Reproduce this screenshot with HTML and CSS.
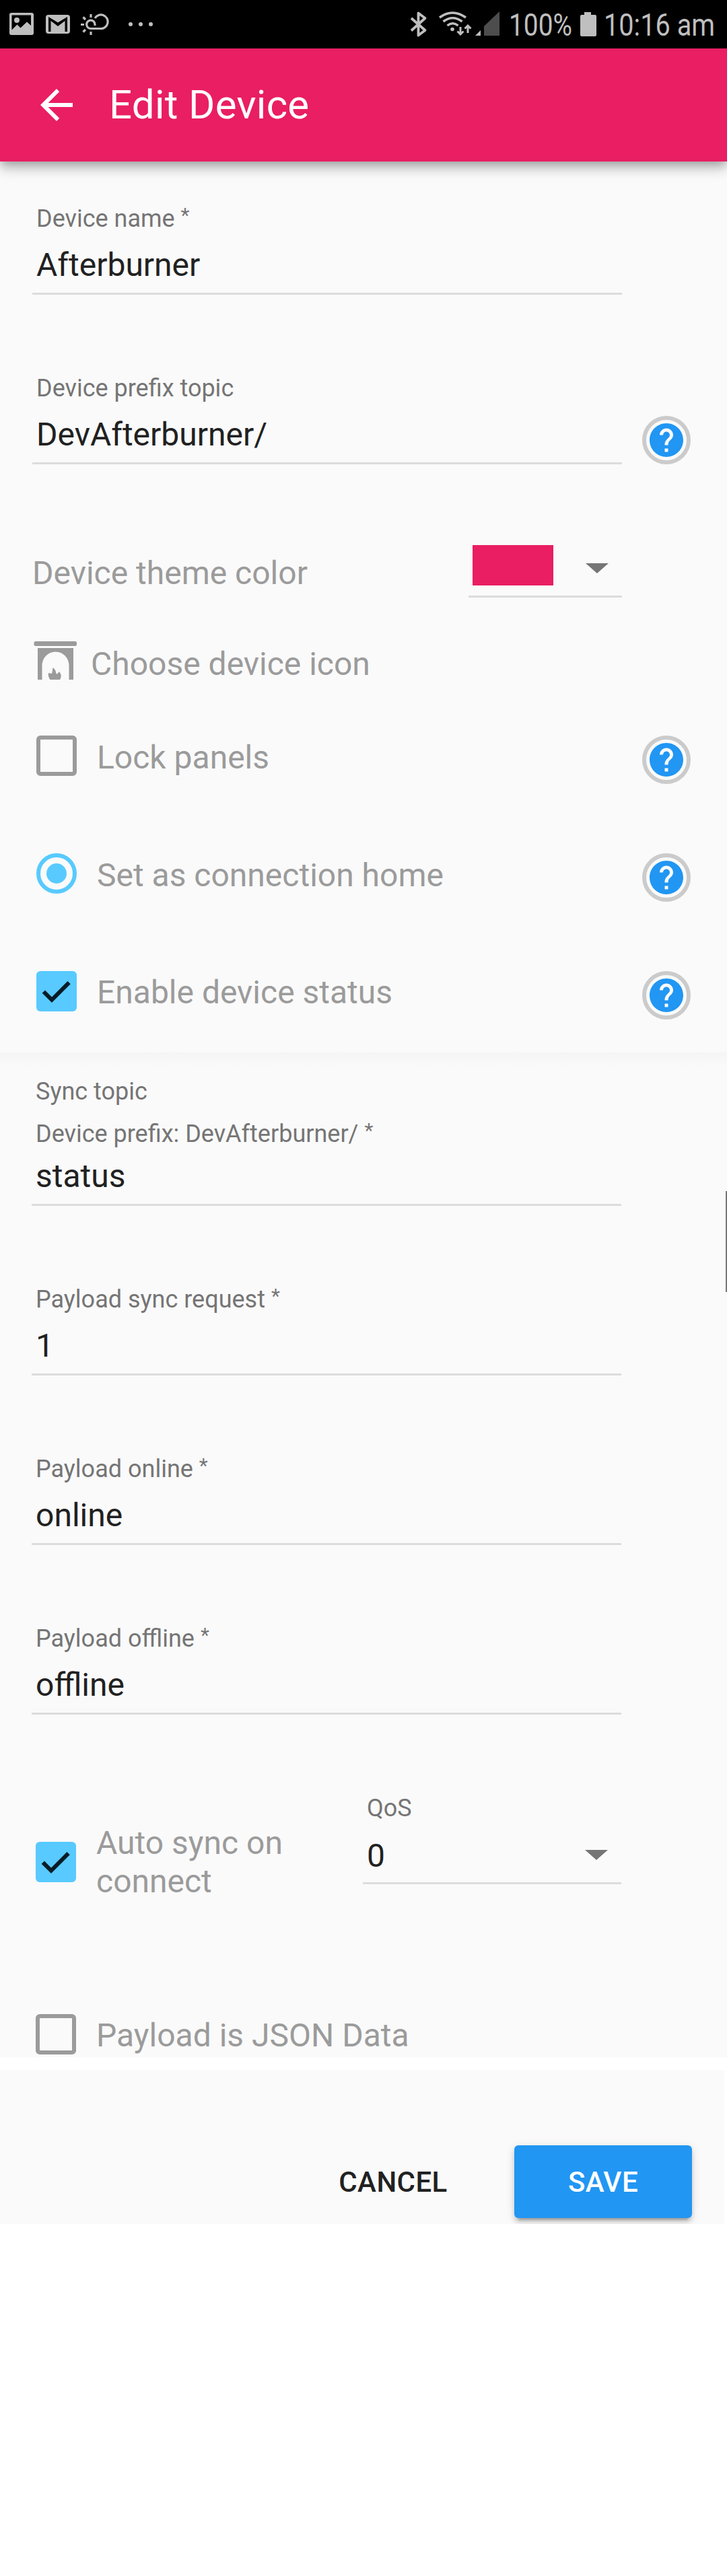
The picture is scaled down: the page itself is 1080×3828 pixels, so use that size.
FILE: index.html
```html
<!DOCTYPE html>
<html lang="en">
<head>
<meta charset="utf-8">
<title>Edit Device</title>
<link rel="stylesheet" href="styles.css">
</head>
<body>
<svg class="defs" aria-hidden="true">
  <symbol id="help" viewBox="0 0 24 24"><path d="M12 2C6.48 2 2 6.48 2 12s4.48 10 10 10 10-4.48 10-10S17.52 2 12 2zm1 17h-2v-2h2v2zm2.07-7.75l-.9.92C13.45 12.9 13 13.5 13 15h-2v-.5c0-1.1.45-2.1 1.17-2.83l1.24-1.26c.37-.36.59-.86.59-1.41 0-1.1-.9-2-2-2s-2 .9-2 2H8c0-2.21 1.79-4 4-4s4 1.79 4 4c0 .88-.36 1.68-.93 2.25z"/></symbol>
  <symbol id="tick" viewBox="0 0 60 60"><path d="M10.8 30.6L23 42.8 48.6 17.2" fill="none" stroke="#071c27" stroke-width="6"/></symbol>
</svg>

<div class="statusbar">
  <svg width="240" height="72" viewBox="0 0 240 72" fill="#bfbfbf">
    <path fill-rule="evenodd" d="M17 19h30q3 0 3 3v27q0 3-3 3h-30q-3 0-3-3v-27q0-3 3-3zM17.500 22.500v22l8-8 5 5 9.500-9 6 5.500v-15.500z"/>
    <circle cx="25" cy="30" r="4"/>
    <path fill-rule="evenodd" d="M72 22h28q4 0 4 4v20q0 4-4 4h-28q-4 0-4-4v-20q0-4 4-4zM72 25v22h3.500v-16l10.500 8 10.500-8v16h3.500v-22l-14 8.500z"/>
    <g fill="none" stroke="#bfbfbf" stroke-width="3.200">
      <path d="M141 38v-2a6.200 6.200 0 1 0-6 6.500h14A10.300 10.300 0 1 0 141 27"/>
      <path d="M135 21v5M135 47v5M120 36.500h5M123.500 25.500l3.500 3.500M123.500 47.500l3.500-3.500"/>
    </g>
    <circle cx="194" cy="36" r="3"/><circle cx="209" cy="36" r="3"/><circle cx="224" cy="36" r="3"/>
  </svg>
  <svg width="480" height="72" viewBox="600 0 480 72" fill="#bfbfbf">
    <path d="M611 27L631.500 45 621.500 52.500V19.500L631.500 27 611 45.500" fill="none" stroke="#bfbfbf" stroke-width="3.800" stroke-linejoin="round"/>
    <g fill="none" stroke="#bfbfbf" stroke-width="3.500">
      <path d="M653 26q19-14 39 0M658.500 32q14-10.500 28 0M664.500 38q8-6.500 16 0"/>
      <path d="M684 40v11M679.500 46.500l4.500 4.500 4.500-4.500M695 49v-11M690.500 42.500l4.500-4.500 4.500 4.500" stroke-width="3"/>
    </g>
    <circle cx="672" cy="43.500" r="2.800"/>
    <path d="M714 45v8h-8z"/>
    <path d="M742 17v36h-23v-14z" fill="#4d4d4d"/>
    <text transform="translate(756 53.300) scale(.846 1)" font-size="46">100%</text>
    <path d="M868 18h10v4h6q2 0 2 2v28q0 2-2 2h-20q-2 0-2-2v-28q0-2 2-2h4z"/>
    <text transform="translate(897 53.300) scale(.863 1)" font-size="46">10:16 am</text>
  </svg>
</div>

<header class="toolbar">
  <svg width="72" height="72" viewBox="0 0 24 24" fill="#fff"><path d="M20 11H7.830l5.590-5.590L12 4l-8 8 8 8 1.410-1.410L7.830 13H20v-2z"/></svg>
  <h1>Edit Device</h1>
</header>

<main>
  <section class="general">
    <div class="field"><label>Device name <sup>*</sup></label><div class="value">Afterburner</div></div>
    <div class="row prefix">
      <div class="field"><label>Device prefix topic</label><div class="value">DevAfterburner/</div></div>
      <div class="help"><svg><use href="#help"/></svg></div>
    </div>
    <div class="row theme">
      <div class="caption">Device theme color</div>
      <div class="colorselect"><i class="swatch"></i><i class="caret"></i></div>
    </div>
    <div class="iconrow">
      <svg width="64" height="58" viewBox="0 0 64 58" fill="#9b9b9b">
        <rect x="0.500" y="0" width="63.500" height="7" rx="2.500"/>
        <path d="M6 10h53v47h-6.500v-21a20 20.500 0 0 0-40 0v21h-6.500z"/>
        <path d="M24.500 57q-3.500-5-2.500-10l5 1q1-4 1.500-9 4 2.500 5 9l1.500.5 3-3.500q5 6 1 12z"/>
      </svg>
      <div class="caption">Choose device icon</div>
    </div>
    <div class="row option">
      <i class="box"></i><div class="caption low">Lock panels</div>
      <div class="help"><svg><use href="#help"/></svg></div>
    </div>
    <div class="row option">
      <i class="radio"></i><div class="caption low">Set as connection home</div>
      <div class="help"><svg><use href="#help"/></svg></div>
    </div>
    <div class="row option">
      <i class="box checked"><svg><use href="#tick"/></svg></i><div class="caption">Enable device status</div>
      <div class="help"><svg><use href="#help"/></svg></div>
    </div>
  </section>

  <section class="status">
    <div class="field sync"><label>Sync topic</label><label>Device prefix: DevAfterburner/ <sup>*</sup></label><div class="value">status</div></div>
    <div class="field"><label>Payload sync request <sup>*</sup></label><div class="value">1</div></div>
    <div class="field"><label>Payload online <sup>*</sup></label><div class="value">online</div></div>
    <div class="field"><label>Payload offline <sup>*</sup></label><div class="value">offline</div></div>
    <div class="row auto">
      <i class="box checked"><svg><use href="#tick"/></svg></i>
      <div class="caption">Auto sync on connect</div>
      <div class="field qos"><label>QoS</label><div class="value">0<i class="caret"></i></div></div>
    </div>
    <div class="row option json"><i class="box"></i><div class="caption">Payload is JSON Data</div></div>
    <i class="scrollbar"></i>
  </section>
</main>

<footer class="actions">
  <button class="cancel">CANCEL</button>
  <button class="save">SAVE</button>
</footer>
</body>
</html>
```
FILE: styles.css
```css
* { box-sizing: border-box; }
body {
  margin: 0;
  width: 1080px;
  min-height: 3828px;
  background: #fff;
  font-family: Roboto, "Liberation Sans", sans-serif;
  color: #212121;
}
svg { display: block; flex: none; }
.defs { display: none; }

.statusbar {
  height: 72px;
  display: flex;
  justify-content: space-between;
  background: #000;
}
.toolbar {
  position: relative;
  z-index: 1;
  height: 168px;
  padding-left: 48px;
  display: flex;
  align-items: center;
  gap: 42px;
  background: #e91e63;
  box-shadow: 0 6px 12px -3px rgba(0,0,0,.2), 0 12px 15px 0 rgba(0,0,0,.14), 0 3px 30px 0 rgba(0,0,0,.12);
}
.toolbar h1 {
  margin: 0;
  font-size: 60px;
  line-height: 72px;
  font-weight: 400;
  letter-spacing: .3px;
  color: #fff;
}

section { background: #fafafa; }
.general { height: 1324px; padding: 63px 54px 0 48px; }
.status {
  position: relative;
  height: 1493px;
  padding: 36px 54px 0 47px;
  background: linear-gradient(#f5f5f5, #fafafa 22px);
}

.field {
  width: 876px;
  border-bottom: 3px solid #dcdcdc;
  padding: 0 6px 11px;
}
.field + .field, .prefix, .auto { margin-top: 117px; }
.field label {
  display: block;
  height: 44px;
  font-size: 36px;
  line-height: 44px;
  color: #757575;
  white-space: nowrap;
}
.field sup {
  font-size: 30px;
  line-height: 0;
  vertical-align: 7px;
}
.value {
  display: flex;
  justify-content: space-between;
  margin-top: 17px;
  font-size: 48px;
  line-height: 60px;
}
.sync label + label { margin-top: 19px; }
.sync .value { margin-top: 11px; }

.row { display: flex; align-items: flex-start; }
.prefix { align-items: flex-end; justify-content: space-between; }
.caption {
  font-size: 48px;
  line-height: 60px;
  color: #9b9b9b;
}
.help {
  width: 72px;
  height: 72px;
  padding: 0;
  display: grid;
  place-items: center;
  border: 6px solid #cbcbcb;
  border-radius: 50%;
  margin-left: auto;
  flex: none;
}
.help svg { width: 60px; height: 60px; fill: #2196f3; }

.theme { margin-top: 120px; width: 876px; justify-content: space-between; }
.theme .caption { margin-top: 12px; }
.colorselect {
  width: 228px;
  height: 78px;
  padding: 0 20px 0 6px;
  display: flex;
  justify-content: space-between;
  border-bottom: 3px solid #dcdcdc;
}
.swatch { width: 120px; height: 60px; background: #e91e63; }
.caret {
  width: 34px;
  height: 15px;
  margin-top: 27px;
  background: #757575;
  clip-path: polygon(0 0, 100% 0, 50% 100%);
}

.iconrow { display: flex; gap: 21px; height: 63px; margin-top: 65px; padding-left: 2px; }
.iconrow .caption { margin-top: 4px; }

.option { margin-top: 77px; padding-left: 6px; }
.option + .option { margin-top: 103px; }
.option .caption { margin: 2px 0 0 30px; }
.option .low { margin-top: 3px; }
.box, .radio {
  width: 60px;
  height: 60px;
  flex: none;
  border: 6px solid #9b9b9b;
  border-radius: 6px;
}
.checked { border: 0; background: #58caff; }
.checked svg { width: 60px; height: 60px; }
.radio {
  border-color: #58caff;
  border-radius: 50%;
  display: grid;
  place-items: center;
}
.radio::after { content: ""; width: 30px; height: 30px; border-radius: 50%; background: #58caff; }

.auto { height: 135px; padding-left: 6px; width: 876px; }
.auto .box { margin-top: 72px; }
.auto .caption { width: 320px; margin: 45px 0 0 30px; line-height: 57px; }
.qos { width: 384px; margin-left: auto; }
.qos .value { margin-top: 19px; margin-bottom: -2px; padding-right: 14px; }
.qos .caret { margin-top: 21px; }
.json { margin-top: 193px; }

.scrollbar {
  position: absolute;
  right: 0;
  top: 206px;
  width: 2px;
  height: 150px;
  background: #777;
}

.actions {
  margin-top: 19px;
  width: 1076px;
  height: 229px;
  padding: 112px 48px 0 0;
  display: flex;
  justify-content: flex-end;
  align-items: flex-start;
  gap: 18px;
  background: #fafafa;
  overflow: hidden;
}
.actions button {
  width: 264px;
  height: 108px;
  border: 0;
  padding: 0;
  border-radius: 6px;
  font: 500 42px/107px Roboto, "Liberation Sans", sans-serif;
  letter-spacing: .42px;
  color: #212121;
  background: none;
}
.actions .cancel { width: 324px; }
.actions .save {
  color: #fff;
  background: #2196f3;
  box-shadow: 0 9px 3px -6px rgba(0,0,0,.2), 0 6px 6px 0 rgba(0,0,0,.14), 0 3px 15px 0 rgba(0,0,0,.12);
}
```
